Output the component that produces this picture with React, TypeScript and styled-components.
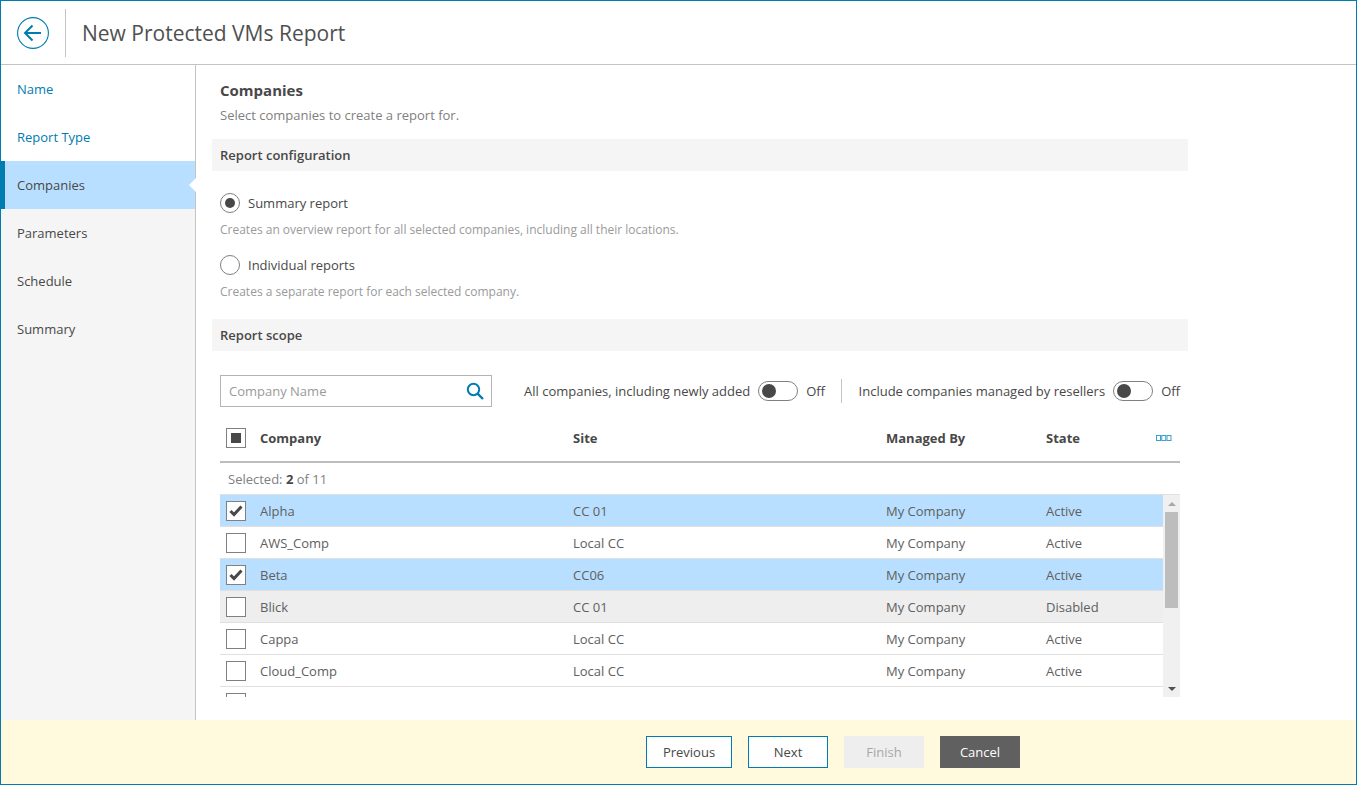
import React from 'react';
import styled, { createGlobalStyle } from 'styled-components';

const GlobalStyle = createGlobalStyle`
  html, body {
    margin: 0;
    padding: 0;
    background: #ffffff;
  }
  * {
    box-sizing: border-box;
  }
`;

const Window = styled.div`
  width: 1357px;
  height: 785px;
  border: 1px solid #007cb0;
  display: flex;
  flex-direction: column;
  overflow: hidden;
  font-family: 'Open Sans', 'Liberation Sans', sans-serif;
  font-size: 13px;
  color: #484848;
  background: #ffffff;
`;

const Header = styled.header`
  height: 64px;
  flex: none;
  display: flex;
  align-items: center;
  padding-left: 16px;
  border-bottom: 1px solid #c4c4c4;
`;

const BackButton = styled.div`
  width: 32px;
  height: 32px;
  color: #007cb0;
  display: flex;
`;

const HeaderDivider = styled.div`
  width: 1px;
  height: 48px;
  background: #c4c4c4;
  margin: 0 16px;
`;

const Title = styled.h1`
  margin: 0;
  font-size: 21px;
  font-weight: 400;
  color: #505050;
`;

const Body = styled.div`
  flex: 1;
  display: flex;
  min-height: 0;
`;

const Sidebar = styled.nav`
  width: 195px;
  flex: none;
  border-right: 1px solid #c4c4c4;
  background: #f5f5f5;
  display: flex;
  flex-direction: column;
`;

const NavItem = styled.div<{ $state: 'done' | 'active' | 'todo' }>`
  height: 48px;
  flex: none;
  display: flex;
  align-items: center;
  padding-left: 16px;
  position: relative;
  color: ${({ $state }) => ($state === 'done' ? '#007cb0' : '#484848')};
  background: ${({ $state }) =>
    $state === 'done' ? '#ffffff' : $state === 'active' ? '#b8dfff' : 'transparent'};
  box-shadow: ${({ $state }) => ($state === 'active' ? 'inset 4px 0 0 #007cb0' : 'none')};
`;

const NavNotch = styled.span`
  position: absolute;
  right: -1px;
  top: 17px;
  width: 0;
  height: 0;
  border-top: 7px solid transparent;
  border-bottom: 7px solid transparent;
  border-right: 7px solid #ffffff;
`;

const Content = styled.main`
  flex: 1;
  padding: 15px 0 0 16px;
  min-width: 0;
`;

const Column = styled.div`
  width: 976px;
`;

const PageHead = styled.div`
  padding: 0 8px;
`;

const PageTitle = styled.h2`
  margin: 0;
  font-size: 15px;
  line-height: 20px;
  font-weight: 700;
  color: #484848;
`;

const PageHint = styled.div`
  margin-top: 5px;
  height: 20px;
  line-height: 20px;
  color: #808080;
`;

const SectionBar = styled.div`
  height: 32px;
  background: #f5f5f5;
  padding: 0 8px;
  display: flex;
  align-items: center;
  font-weight: 600;
  color: #484848;
`;

const ConfigBar = styled(SectionBar)`
  margin-top: 14px;
`;

const RadioGroup = styled.div`
  padding: 22px 8px 19px;
`;

const RadioRow = styled.div`
  display: flex;
  align-items: center;
  gap: 8px;
  height: 20px;
`;

const RadioCircle = styled.span<{ $checked?: boolean }>`
  width: 20px;
  height: 20px;
  border-radius: 50%;
  border: 1px solid #808080;
  display: flex;
  align-items: center;
  justify-content: center;
  &::after {
    content: '';
    width: 10px;
    height: 10px;
    border-radius: 50%;
    background: ${({ $checked }) => ($checked ? '#484848' : 'transparent')};
  }
`;

const RadioHint = styled.div`
  font-size: 12px;
  line-height: 16px;
  height: 16px;
  margin-top: 9px;
  margin-bottom: 17px;
  color: #9a9a9a;

  &:last-child {
    margin-bottom: 0;
  }
`;

const ScopeArea = styled.div`
  padding: 24px 8px 0;
`;

const Toolbar = styled.div`
  display: flex;
  align-items: center;
  height: 32px;
  white-space: nowrap;
`;

const SearchBox = styled.div`
  width: 272px;
  height: 32px;
  flex: none;
  border: 1px solid #b4b4b4;
  display: flex;
  align-items: center;
  justify-content: space-between;
  padding: 0 7px 0 8px;
  color: #9a9a9a;
  margin-right: 32px;
`;

const SearchIcon = styled.svg`
  width: 18px;
  height: 18px;
  color: #007cb0;
`;

const ToggleLabel = styled.span`
  color: #484848;
`;

const ToggleTrack = styled.span`
  width: 40px;
  height: 20px;
  flex: none;
  border: 1px solid #808080;
  border-radius: 10px;
  margin: 0 8px;
  padding: 2px 3px;
  display: flex;
  &::before {
    content: '';
    width: 14px;
    height: 14px;
    border-radius: 50%;
    background: #484848;
  }
`;

const ToolbarDivider = styled.span`
  width: 1px;
  height: 24px;
  flex: none;
  background: #c4c4c4;
  margin: 0 16.5px 0 16px;
`;

const GridRow = styled.div`
  display: grid;
  grid-template-columns: 40px 313px 313px 160px 1fr;
  align-items: center;
`;

const TableHead = styled(GridRow)`
  height: 40px;
  margin-top: 16px;
  padding-bottom: 8px;
  border-bottom: 2px solid #bdbdbd;
  font-weight: 700;
`;

const ColumnsIcon = styled.svg`
  width: 16px;
  height: 6px;
  color: #3d9fcf;
  justify-self: end;
  margin-right: 8px;
`;

const StateCell = styled.div`
  display: flex;
  align-items: center;
  justify-content: space-between;
`;

const SelectedLine = styled.div`
  height: 32px;
  line-height: 32px;
  padding-left: 8px;
  color: #808080;
  border-bottom: 1px solid #e0e0e0;

  b {
    color: #484848;
    font-weight: 700;
  }
`;

const ListFrame = styled.div`
  height: 202px;
  display: flex;
  overflow: hidden;
`;

const Rows = styled.div`
  flex: 1;
  min-width: 0;
  overflow: hidden;
`;

const Row = styled(GridRow)<{ $tone: 'plain' | 'selected' | 'disabled' }>`
  height: 32px;
  flex: none;
  border-bottom: 1px solid #e0e0e0;
  color: #606060;
  background: ${({ $tone }) =>
    $tone === 'selected' ? '#b8dfff' : $tone === 'disabled' ? '#eeeeee' : '#ffffff'};
`;

const Check = styled.span<{ $mark?: 'tick' | 'square' }>`
  width: 20px;
  height: 20px;
  margin-left: 6px;
  border: 1px solid #808080;
  background: #ffffff;
  display: flex;
  align-items: center;
  justify-content: center;
  color: #484848;
  &::after {
    content: '';
    display: ${({ $mark }) => ($mark === 'square' ? 'block' : 'none')};
    width: 10px;
    height: 10px;
    background: #484848;
  }
`;

const Scrollbar = styled.div`
  width: 17px;
  flex: none;
  background: #f0f0f0;
  display: flex;
  flex-direction: column;
  align-items: center;
`;

const ScrollArrow = styled.span<{ $down?: boolean }>`
  height: 17px;
  flex: none;
  display: flex;
  align-items: center;
  justify-content: center;
  &::after {
    content: '';
    border-left: 4px solid transparent;
    border-right: 4px solid transparent;
    ${({ $down }) =>
      $down ? 'border-top: 4px solid #505050;' : 'border-bottom: 4px solid #a8a8a8;'}
  }
`;

const ScrollThumb = styled.span`
  width: 13px;
  height: 96px;
  flex: none;
  background: #bdbdbd;
`;

const ScrollSpacer = styled.span`
  flex: 1;
`;

const Footer = styled.footer`
  height: 64px;
  flex: none;
  background: #fffadd;
  display: flex;
  align-items: center;
  gap: 16px;
  padding-left: 645px;
`;

const Button = styled.div<{ $kind?: 'disabled' | 'dark'; $width: number }>`
  width: ${({ $width }) => $width}px;
  height: 32px;
  display: flex;
  align-items: center;
  justify-content: center;
  border: 1px solid
    ${({ $kind }) => ($kind === 'disabled' ? '#eeeeee' : $kind === 'dark' ? '#606060' : '#007cb0')};
  background: ${({ $kind }) =>
    $kind === 'disabled' ? '#eeeeee' : $kind === 'dark' ? '#606060' : '#ffffff'};
  color: ${({ $kind }) =>
    $kind === 'disabled' ? '#a8a8a8' : $kind === 'dark' ? '#ffffff' : '#484848'};
`;

const steps: { label: string; state: 'done' | 'active' | 'todo' }[] = [
  { label: 'Name', state: 'done' },
  { label: 'Report Type', state: 'done' },
  { label: 'Companies', state: 'active' },
  { label: 'Parameters', state: 'todo' },
  { label: 'Schedule', state: 'todo' },
  { label: 'Summary', state: 'todo' },
];

const companies = [
  { name: 'Alpha', site: 'CC 01', state: 'Active', tone: 'selected' as const },
  { name: 'AWS_Comp', site: 'Local CC', state: 'Active', tone: 'plain' as const },
  { name: 'Beta', site: 'CC06', state: 'Active', tone: 'selected' as const },
  { name: 'Blick', site: 'CC 01', state: 'Disabled', tone: 'disabled' as const },
  { name: 'Cappa', site: 'Local CC', state: 'Active', tone: 'plain' as const },
  { name: 'Cloud_Comp', site: 'Local CC', state: 'Active', tone: 'plain' as const },
  { name: '', site: '', state: '', tone: 'plain' as const },
];

const Tick = () => (
  <svg width="14" height="12" viewBox="0 0 14 12">
    <path d="M1.5 6 L5 9.5 L12.5 1.5" fill="none" stroke="#484848" strokeWidth="3" />
  </svg>
);

const App: React.FC = () => {
  return (
    <Window>
      <GlobalStyle />
      <Header>
        <BackButton>
          <svg width="32" height="32" viewBox="0 0 32 32" fill="none" stroke="currentColor">
            <circle cx="16" cy="16" r="15.4" strokeWidth="1.1" />
            <path d="M8 16 H24 M15.5 8.5 L8 16 L15.5 23.5" strokeWidth="2" />
          </svg>
        </BackButton>
        <HeaderDivider />
        <Title>New Protected VMs Report</Title>
      </Header>
      <Body>
        <Sidebar>
          {steps.map((step) => (
            <NavItem key={step.label} $state={step.state}>
              {step.label}
              {step.state === 'active' && <NavNotch />}
            </NavItem>
          ))}
        </Sidebar>
        <Content>
          <Column>
            <PageHead>
              <PageTitle>Companies</PageTitle>
              <PageHint>Select companies to create a report for.</PageHint>
            </PageHead>
            <ConfigBar>Report configuration</ConfigBar>
            <RadioGroup>
              <RadioRow>
                <RadioCircle $checked />
                Summary report
              </RadioRow>
              <RadioHint>Creates an overview report for all selected companies, including all their locations.</RadioHint>
              <RadioRow>
                <RadioCircle />
                Individual reports
              </RadioRow>
              <RadioHint>Creates a separate report for each selected company.</RadioHint>
            </RadioGroup>
            <SectionBar>Report scope</SectionBar>
            <ScopeArea>
              <Toolbar>
                <SearchBox>
                  Company Name
                  <SearchIcon viewBox="0 0 18 18" fill="none" stroke="currentColor">
                    <circle cx="7.5" cy="7.5" r="5.7" strokeWidth="2" />
                    <path d="M11.6 11.6 L17 17" strokeWidth="2.4" />
                  </SearchIcon>
                </SearchBox>
                <ToggleLabel>All companies, including newly added</ToggleLabel>
                <ToggleTrack />
                <ToggleLabel>Off</ToggleLabel>
                <ToolbarDivider />
                <ToggleLabel>Include companies managed by resellers</ToggleLabel>
                <ToggleTrack />
                <ToggleLabel>Off</ToggleLabel>
              </Toolbar>
              <TableHead>
                <Check $mark="square" />
                <span>Company</span>
                <span>Site</span>
                <span>Managed By</span>
                <StateCell>
                  <span>State</span>
                  <ColumnsIcon viewBox="0 0 16 6" fill="none" stroke="currentColor">
                    <rect x="0.5" y="0.5" width="4" height="5" />
                    <rect x="5.75" y="0.5" width="4" height="5" />
                    <rect x="11" y="0.5" width="4" height="5" />
                  </ColumnsIcon>
                </StateCell>
              </TableHead>
              <SelectedLine>
                Selected: <b>2</b> of 11
              </SelectedLine>
              <ListFrame>
                <Rows>
                  {companies.map((company, index) => (
                    <Row key={index} $tone={company.tone}>
                      <Check>{company.tone === 'selected' && <Tick />}</Check>
                      <span>{company.name}</span>
                      <span>{company.site}</span>
                      <span>{company.name && 'My Company'}</span>
                      <span>{company.state}</span>
                    </Row>
                  ))}
                </Rows>
                <Scrollbar>
                  <ScrollArrow />
                  <ScrollThumb />
                  <ScrollSpacer />
                  <ScrollArrow $down />
                </Scrollbar>
              </ListFrame>
            </ScopeArea>
          </Column>
        </Content>
      </Body>
      <Footer>
        <Button $width={86}>Previous</Button>
        <Button $width={80}>Next</Button>
        <Button $width={80} $kind="disabled">Finish</Button>
        <Button $width={80} $kind="dark">Cancel</Button>
      </Footer>
    </Window>
  );
};

export default App;
